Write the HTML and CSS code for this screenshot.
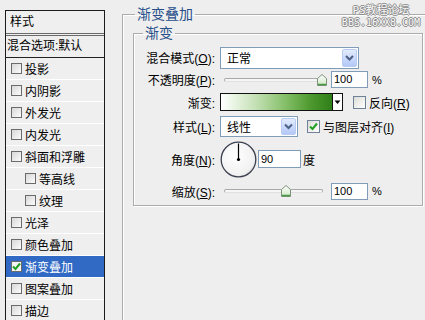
FILE: index.html
```html
<!DOCTYPE html>
<html lang="zh">
<head>
<meta charset="utf-8">
<title>图层样式</title>
<link rel="stylesheet" href="styles.css">
</head>
<body>
<div class="app">
  <div class="styles-list">
    <div class="list-head">样式</div>
    <div class="list-blend">混合选项:默认</div>
    <div class="item"><span class="cb"></span>投影</div>
    <div class="item"><span class="cb"></span>内阴影</div>
    <div class="item"><span class="cb"></span>外发光</div>
    <div class="item"><span class="cb"></span>内发光</div>
    <div class="item"><span class="cb"></span>斜面和浮雕</div>
    <div class="item sub"><span class="cb"></span>等高线</div>
    <div class="item sub"><span class="cb"></span>纹理</div>
    <div class="item"><span class="cb"></span>光泽</div>
    <div class="item"><span class="cb"></span>颜色叠加</div>
    <div class="item selected"><span class="cb on"><svg width="9" height="9" viewBox="0 0 9 9"><path d="M1 4.5 L3.5 7 L8 1.5" fill="none" stroke="#21a121" stroke-width="2"/></svg></span>渐变叠加</div>
    <div class="item"><span class="cb"></span>图案叠加</div>
    <div class="item last"><span class="cb"></span>描边</div>
  </div>

  <fieldset class="group outer">
    <legend>渐变叠加</legend>
    <fieldset class="group inner">
      <legend>渐变</legend>

      <div class="row r1">
        <span class="lbl">混合模式(<u>O</u>):</span>
        <div class="select wide"><span class="sel-text">正常</span><span class="drop"><svg width="13" height="18" viewBox="0 0 13 18"><path d="M3 7 L6.5 10.5 L10 7" fill="none" stroke="#4d6185" stroke-width="2"/></svg></span></div>
      </div>

      <div class="row r2">
        <span class="lbl">不透明度(<u>P</u>):</span>
        <div class="slider"><span class="track"></span><span class="thumb thumb-high"><svg width="10" height="12" viewBox="0 0 10 12"><defs><linearGradient id="tg1" x1="0" y1="0" x2="0" y2="1"><stop offset="0" stop-color="#ffffff"/><stop offset="1" stop-color="#cfe8c4"/></linearGradient></defs><path d="M0.5 4.5 L5 0.5 L9.5 4.5 L9.5 11.5 L0.5 11.5 Z" fill="url(#tg1)" stroke="#7d927d"/><path d="M1 10.5 H9" stroke="#4a9a44" stroke-width="1.5"/></svg></span></div>
        <span class="num">100</span>
        <span class="unit">%</span>
      </div>

      <div class="row r3">
        <span class="lbl">渐变:</span>
        <div class="gradient"></div>
        <span class="grad-drop"><svg width="9" height="16" viewBox="0 0 9 16"><path d="M1.5 6.5 H7.5 L4.5 10 Z" fill="#000"/></svg></span>
        <span class="check reverse"></span>
        <span class="check-lbl">反向(<u>R</u>)</span>
      </div>

      <div class="row r4">
        <span class="lbl">样式(<u>L</u>):</span>
        <div class="select narrow"><span class="sel-text">线性</span><span class="drop"><svg width="13" height="17" viewBox="0 0 13 17"><path d="M3 6.5 L6.5 10 L10 6.5" fill="none" stroke="#4d6185" stroke-width="2"/></svg></span></div>
        <span class="check align on"><svg width="11" height="11" viewBox="0 0 11 11"><path d="M2 5.5 L4.5 8 L9 2.5" fill="none" stroke="#21a121" stroke-width="2"/></svg></span>
        <span class="check-lbl">与图层对齐(<u>I</u>)</span>
      </div>

      <div class="row r5">
        <span class="lbl">角度(<u>N</u>):</span>
        <svg class="dial" width="37" height="37" viewBox="0 0 37 37"><defs><radialGradient id="dg" cx="0.4" cy="0.4" r="0.7"><stop offset="0" stop-color="#ffffff"/><stop offset="0.8" stop-color="#f1f1f1"/><stop offset="1" stop-color="#c9c9c9"/></radialGradient></defs><circle cx="18.5" cy="18.5" r="17.3" fill="url(#dg)" stroke="#3d4150" stroke-width="1.3"/><path d="M18.5 18.5 V2.5" stroke="#000" stroke-width="1.2"/><circle cx="18.5" cy="18.5" r="1.6" fill="#000"/></svg>
        <span class="num angle">90</span>
        <span class="unit deg">度</span>
      </div>

      <div class="row r6">
        <span class="lbl">缩放(<u>S</u>):</span>
        <div class="slider"><span class="track"></span><span class="thumb thumb-mid"><svg width="10" height="12" viewBox="0 0 10 12"><defs><linearGradient id="tg2" x1="0" y1="0" x2="0" y2="1"><stop offset="0" stop-color="#ffffff"/><stop offset="1" stop-color="#cfe8c4"/></linearGradient></defs><path d="M0.5 4.5 L5 0.5 L9.5 4.5 L9.5 11.5 L0.5 11.5 Z" fill="url(#tg2)" stroke="#7d927d"/><path d="M1 10.5 H9" stroke="#4a9a44" stroke-width="1.5"/></svg></span></div>
        <span class="num">100</span>
        <span class="unit">%</span>
      </div>
    </fieldset>
  </fieldset>

  <div class="watermark">
    <div class="wm1">PS教程论坛</div>
    <div class="wm2">BBS.16XX8.COM</div>
  </div>
</div>
</body>
</html>
```

FILE: styles.css
```css
html, body {
  margin: 0;
  padding: 0;
}
body {
  width: 425px;
  height: 320px;
  overflow: hidden;
  background: #eeeeee;
  font-family: "Liberation Sans", "Noto Sans CJK SC", sans-serif;
  font-size: 12px;
  color: #000;
}
.app {
  position: relative;
  display: flex;
  align-items: flex-start;
  width: 425px;
  height: 320px;
  overflow: hidden;
}

/* ---------- left styles list ---------- */
.styles-list {
  flex: none;
  box-sizing: border-box;
  width: 100px;
  height: 310px;
  margin: 10px 0 0 5px;
  border: 1px solid #1b1b1b;
  border-bottom: none;
  background: #efefef;
  overflow: hidden;
}
.list-head {
  height: 22px;
  line-height: 22px;
  padding-left: 4px;
  border-bottom: 3px double #6a6a6a;
}
.list-blend {
  height: 21px;
  line-height: 21px;
  padding-left: 1px;
  border-bottom: 1px solid #222;
}
.item {
  display: flex;
  align-items: center;
  gap: 3px;
  height: 21px;
  padding-left: 5px;
  border-bottom: 1px solid #ffffff;
}
.item.last {
  height: 20px;
  border-bottom: none;
}
.item.sub {
  padding-left: 19px;
}
.item.selected {
  background: #316ac5;
  color: #fff;
}
.cb {
  flex: none;
  box-sizing: border-box;
  width: 11px;
  height: 11px;
  border: 1px solid #6b6b6b;
  background: linear-gradient(135deg, #d8d8d8, #fbfbfb);
  display: flex;
  align-items: center;
  justify-content: center;
}
.cb.on {
  background: #f4f4f4;
}

/* ---------- group boxes ---------- */
.group {
  box-sizing: border-box;
  margin: 0;
  border: 1px solid #acacac;
  box-shadow: inset 1px 1px 0 #fff, 1px 1px 0 #fff;
  min-width: 0;
}
.group legend {
  padding: 0 2px;
  font-size: 14px;
  line-height: 16px;
  color: #27508a;
}
.outer {
  flex: none;
  width: 304px;
  height: 314px;
  margin: 6px 0 0 17px;
  padding: 3px 0 0 10px;
  border-bottom: none;
  box-shadow: inset 1px 1px 0 #fff;
}
.outer > legend {
  margin-left: 2px;
}
.inner {
  width: 290px;
  padding: 5px 0 3px 0;
}
.inner > legend {
  margin-left: 9px;
}

/* ---------- form rows ---------- */
.row {
  display: flex;
  align-items: center;
}
.r1 { height: 23px; }
.r2 { height: 21px; }
.r3 { height: 24px; }
.r4 { height: 24px; }
.r5 { height: 42px; }
.r6 { height: 22px; }

.lbl {
  flex: none;
  width: 81px;
  margin-right: 5px;
  text-align: right;
  white-space: nowrap;
}

.select {
  flex: none;
  box-sizing: border-box;
  display: flex;
  align-items: stretch;
  justify-content: space-between;
  border: 1px solid #7f9db9;
  background: #fff;
}
.select.wide { width: 139px; height: 22px; }
.select.narrow { width: 78px; height: 21px; }
.sel-text {
  padding-left: 6px;
  display: flex;
  align-items: center;
}
.drop {
  width: 15px;
  margin: 1px;
  box-sizing: border-box;
  border: 1px solid #b8cbf2;
  border-radius: 2px;
  background: linear-gradient(180deg, #e3ecfd 0%, #c6d6fb 60%, #b4c8f6 100%);
  display: flex;
  align-items: center;
  justify-content: center;
}

.slider {
  flex: none;
  position: relative;
  width: 111px;
  height: 14px;
}
.track {
  position: absolute;
  left: 4px;
  top: 5px;
  width: 97px;
  height: 2px;
  border: 1px solid #a9a9a9;
  border-bottom-color: #e0e0e0;
  border-radius: 2px;
  background: #f6f6f6;
}
.thumb {
  position: absolute;
  top: 1px;
  width: 10px;
  height: 12px;
  line-height: 0;
}
.thumb-high { left: 97px; }
.thumb-mid { left: 61px; }

.num {
  flex: none;
  box-sizing: border-box;
  width: 37px;
  height: 17px;
  line-height: 15px;
  padding-left: 2px;
  border: 1px solid #7f9db9;
  background: #fff;
  font-size: 11px;
}
.unit {
  margin-left: 4px;
  font-size: 11px;
}
.angle {
  width: 43px;
  height: 18px;
  line-height: 16px;
  margin-left: 1px;
}
.unit.deg {
  margin-left: 2px;
  font-size: 12px;
}

.gradient {
  flex: none;
  box-sizing: border-box;
  width: 113px;
  height: 18px;
  border: 1px solid #111;
  background: linear-gradient(90deg, #ffffff 0%, #e9f4e3 12%, #bcdcab 35%, #84bf68 58%, #4f9a30 80%, #2f7e18 100%);
}
.grad-drop {
  flex: none;
  box-sizing: border-box;
  width: 11px;
  height: 18px;
  margin-left: -1px;
  border: 1px solid #111;
  background: #fff;
  display: flex;
  align-items: center;
  justify-content: center;
}

.check {
  flex: none;
  box-sizing: border-box;
  width: 13px;
  height: 13px;
  border: 1px solid #6f8196;
  background: linear-gradient(135deg, #dcdcd7, #ffffff);
  display: flex;
  align-items: center;
  justify-content: center;
}
.check.reverse { margin-left: 10px; }
.check.align { margin-left: 9px; }
.check-lbl {
  margin-left: 3px;
  white-space: nowrap;
}

.dial {
  flex: none;
  display: block;
}

/* ---------- watermark overlay ---------- */
.watermark {
  position: absolute;
  left: 338px;
  top: 4px;
  width: 86px;
  text-align: center;
  color: #fafafa;
  text-shadow: 1px 0 0 #8a8a8a, -1px 0 0 #8a8a8a, 0 1px 0 #8a8a8a, 0 -1px 0 #8a8a8a;
}
.wm1 {
  font-family: "DejaVu Sans Mono", "Noto Sans CJK SC", monospace;
  font-size: 11px;
  line-height: 13px;
}
.wm2 {
  font-family: "DejaVu Sans Mono", monospace;
  font-size: 10px;
  line-height: 12px;
}
```
